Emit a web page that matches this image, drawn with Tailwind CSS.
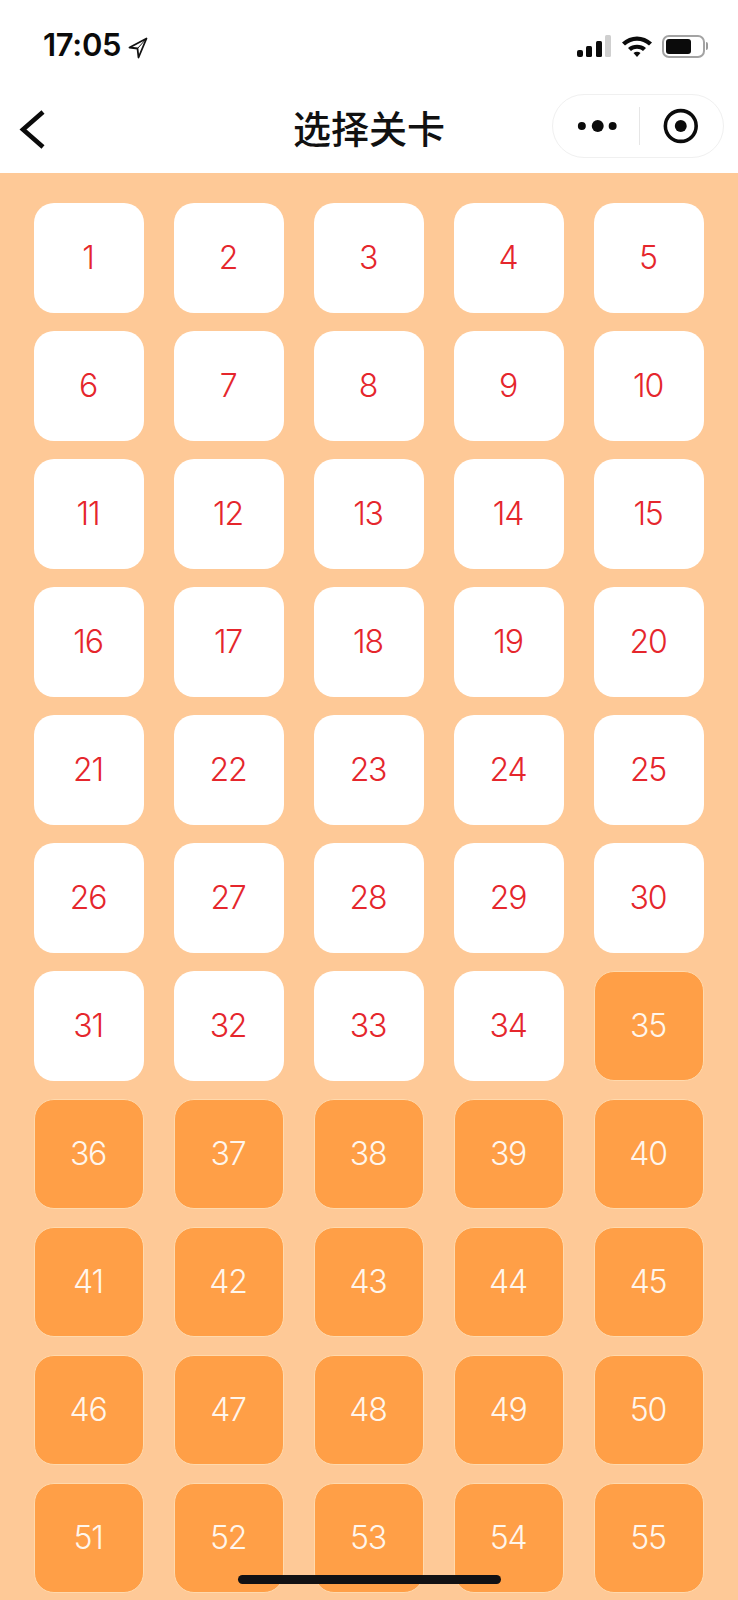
<!DOCTYPE html>
<html lang="zh-CN">
  <head>
    <meta charset="utf-8">
    <title>选择关卡</title>
    <script src="https://cdn.jsdelivr.net/npm/@tailwindcss/browser@4"></script>
  </head>
  <body class="relative h-[1600px] overflow-hidden bg-[#fec997] font-['Inter','Noto_Sans_CJK_SC',sans-serif]">
    <!-- Status bar -->
    <div class="h-[88px] bg-white flex items-start justify-between pt-[28px] pl-[43px] pr-[30px]">
      <div class="flex items-center gap-[7px]">
        <span class="text-[31px] leading-[34px] font-semibold text-[#0b0b0b] tracking-[-0.3px]">17:05</span>
        <svg width="20" height="22" viewBox="0 0 20 22" class="mt-[5px]" fill="none" stroke="#111" stroke-width="1.8" stroke-linejoin="round">
          <path d="M18.5 1.5 1.5 10.5 9.5 11.5 10.5 20.5Z"/>
          <path d="M18.5 1.5 9.5 11.5" stroke-width="1"/>
        </svg>
      </div>
      <div class="flex items-center mt-[6px]">
        <svg width="46" height="24" viewBox="0 0 46 24">
          <rect x="0" y="16" width="6" height="7" rx="2" fill="#0b0b0b"/>
          <rect x="9" y="12" width="6" height="11" rx="1.5" fill="#0b0b0b"/>
          <rect x="19" y="7" width="6" height="16" rx="1.5" fill="#0b0b0b"/>
          <rect x="28" y="1" width="6" height="22" rx="1.5" fill="#cfcfcf"/>
        </svg>
        <svg width="32" height="24" viewBox="0 0 32 24" class="-ml-[2px]">
          <path d="M1 8.5C9.5.5 22.5.5 31 8.5L28 11.5C21 5 11 5 4 11.5Z" fill="#0b0b0b"/>
          <path d="M7 14C12 9.6 20 9.6 25 14L22 17C18.5 14 13.5 14 10 17Z" fill="#0b0b0b"/>
          <path d="M12.5 19C14.5 17.4 17.5 17.4 19.5 19L16 23Z" fill="#0b0b0b"/>
        </svg>
        <div class="ml-[9px] w-[43px] h-[23px] rounded-[7px] border-2 border-[#a3a3a3] p-[2px]">
          <div class="w-[25px] h-[15px] rounded-[3px] bg-[#0b0b0b]"></div>
        </div>
        <div class="ml-[1px] w-[2px] h-[8px] rounded-r-full bg-[#9a9a9a]"></div>
      </div>
    </div>

    <!-- Navigation bar -->
    <div class="h-[85px] bg-white grid grid-cols-[1fr_auto_1fr] items-start">
      <div class="pl-[19px] pt-[22px]">
        <svg width="28" height="40" viewBox="0 0 28 40" fill="none" stroke="#0b0b0b" stroke-width="4.6">
          <path d="M24 2 4 19.5 24 37"/>
        </svg>
      </div>
      <h1 class="text-[38px] leading-[48px] font-medium text-[#111] mt-[17px]">选择关卡</h1>
      <div class="flex justify-end pr-[14px] pt-[6px]">
        <div class="w-[172px] h-[64px] rounded-full border border-[#f0f0f0] bg-white flex items-center">
          <svg width="86" height="40" viewBox="0 0 86 40">
            <circle cx="29" cy="20" r="4" fill="#0b0b0b"/>
            <circle cx="45" cy="20" r="6" fill="#0b0b0b"/>
            <circle cx="60" cy="20" r="4" fill="#0b0b0b"/>
          </svg>
          <div class="w-px h-[38px] bg-[#e6e6e6]"></div>
          <svg width="84" height="40" viewBox="0 0 84 40">
            <circle cx="41" cy="20" r="15.5" fill="none" stroke="#0b0b0b" stroke-width="3.6"/>
            <circle cx="41" cy="20" r="6" fill="#0b0b0b"/>
          </svg>
        </div>
      </div>
    </div>

    <!-- Level grid -->
    <div id="levels" class="grid grid-cols-5 gap-x-[30px] gap-y-[18px] px-[34px] pt-[30px]"></div>

    <!-- Home indicator -->
    <div class="absolute left-[238px] top-[1575px] w-[263px] h-[9px] rounded-full bg-[#111114]"></div>

    <script>
      // 1-34 are unlocked, the rest stay locked
      const unlocked = "h-[110px] rounded-[20px] bg-white flex items-center justify-center pb-[1px] pr-[2px] text-[32px] font-light tracking-[-1.2px] text-[#e5262c]";
      const locked = "h-[110px] rounded-[20px] bg-[#ff9f47] border border-[#ffd9ac] flex items-center justify-center pb-[1px] pr-[2px] text-[32px] font-light tracking-[-1.2px] text-[#fff6ec]";
      const grid = document.getElementById('levels');

      for (let i = 1; i <= 55; i++) {
        const cell = document.createElement('div');
        cell.className = i <= 34 ? unlocked : locked;
        cell.textContent = i;
        grid.appendChild(cell);
      }
    </script>
  </body>
</html>
